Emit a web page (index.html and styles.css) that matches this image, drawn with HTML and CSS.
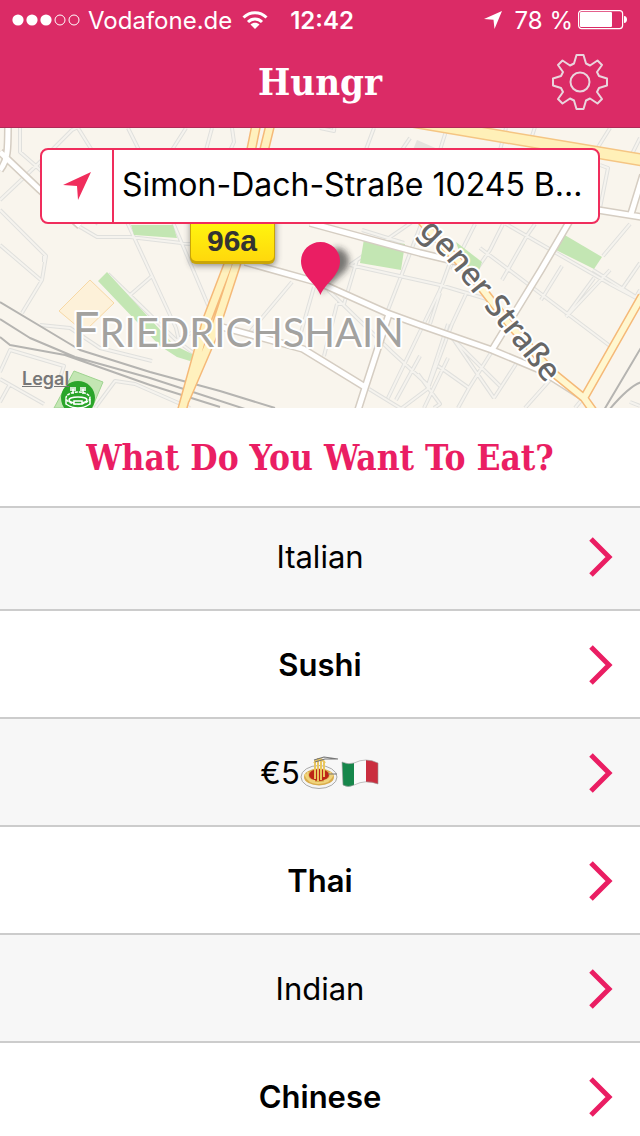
FILE: index.html
```html
<!DOCTYPE html>
<html lang="en">
<head>
    <meta charset="utf-8" />
    <meta name="viewport" content="width=device-width" />
    <title>Hungr</title>
    <link rel="stylesheet" href="styles.css">
</head>
<body>
    <header class="header">
        <div class="status">
            <div class="carrier">
                <svg width="68" height="12" viewBox="0 0 68 12">
                    <g fill="#fff"><circle cx="6" cy="6" r="5.6"/><circle cx="20" cy="6" r="5.6"/><circle cx="34" cy="6" r="5.6"/></g>
                    <g fill="none" stroke="#fff"><circle cx="48" cy="6" r="5"/><circle cx="62" cy="6" r="5"/></g>
                </svg>
                <span>Vodafone.de</span>
                <svg width="26" height="20" viewBox="0 0 26 20">
                    <g fill="none" stroke="#fff" stroke-width="3">
                        <path d="M1.500 7.500C8 1 18 1 24.500 7.500"/>
                        <path d="M6 12C10 8 16 8 20 12"/>
                    </g>
                    <path d="M8.500 14.500C11 12.300 15 12.300 17.500 14.500L13 19Z" fill="#fff"/>
                </svg>
            </div>
            <time class="clock">12:42</time>
            <div class="power">
                <svg class="gps" width="18" height="18" viewBox="0 0 18 18"><path d="M18 0L0 8L9.500 8.800L10.500 18Z" fill="#fff"/></svg>
                <span>78 %</span>
                <svg width="50" height="20" viewBox="0 0 50 20">
                    <rect x=".6" y=".6" width="44" height="18" rx="3" fill="none" stroke="#fff" stroke-width="1.200"/>
                    <rect x="2" y="2" width="32" height="15" rx="1" fill="#fff"/>
                    <path d="M46 6C50 6 50 13 46 13Z" fill="#fff"/>
                </svg>
            </div>
        </div>
        <div class="titlebar">
            <h1>Hungr</h1>
            <button class="settings" type="button" aria-label="Settings">
                <svg width="56" height="56" viewBox="-28 -28 56 56" fill="none" stroke="#ead5dd" stroke-width="2" stroke-linejoin="round">
                    <circle r="9.500"/>
                    <path d="M-3.500-27H3.500L6-18.500L10-16.500L17.500-21.500L22-17L17-10L19-6L27-3.500V3.500L19 6L17 10L22 17L17.500 21.500L10 16.500L6 18.500L3.500 27H-3.500L-6 18.500L-10 16.500L-17.500 21.500L-22 17L-17 10L-19 6L-27 3.500V-3.500L-19-6L-17-10L-22-17L-17.500-21.500L-10-16.500L-6-18.500Z"/>
                </svg>
            </button>
        </div>
    </header>

    <section class="map">
        <!-- viewBox starts at 128, the height of the header -->
        <svg class="tiles" viewBox="0 128 640 280" preserveAspectRatio="xMidYMid slice">
            <defs>
                <linearGradient id="shield" x1="0" y1="0" x2="0" y2="1"><stop offset="0" stop-color="#ffff10"/><stop offset="1" stop-color="#ffd80c"/></linearGradient>
                <filter id="blur" x="-50%" y="-50%" width="200%" height="200%"><feGaussianBlur stdDeviation="3"/></filter>
                <path id="boxhagener" d="M418 232L450 264L485 308L560 401"/>
                <path id="minor" d="M20 128V152L36 166L98 224M0 200L36 166L72 130L92 120M78 128L98 160M128 128L140 152M186 128L172 150M212 128L206 150M232 128L234 142L228 155
                    M75 224L97 237H130L190 244M126 220L152 276M172 220L208 305L218 302M152 276L176 328L180 345M152 276L129 296M108 274L176 340L196 355M176 340L215 322
                    M0 210L46 256L42 280L22 313M0 245L42 281M44 262V256M40 325L70 328L100 348L152 361M0 372L10 350L64 366L60 378M0 379L44 404M10 384L0 402M95 408L115 381L135 384L190 408
                    M292 282L250 332M314 287L296 350M337 304L324 356M328 290L392 352L430 387M357 260L344 304L337 304
                    M350 265L440 285L490 300M404 243L362 230M412 222L350 265M422 222L388 310M452 257L440 290L388 398M374 128L362 160M320 128L334 131L335 120M410 138L395 160M447 128L440 150M506 128L500 150M536 124L530 142M610 128L590 160M640 138L632 154
                    M440 293L430 324M448 324L428 385M418 374L440 404L434 408M452 324L428 388M466 294L452 324M452 338L500 386M454 340L494 398M438 366L469 388L494 348M469 388L458 408M494 398L516 364M430 387L402 408M369 389L400 408M420 356L396 400M424 408L448 358
                    M475 224L452 270M503 224L490 250L468 282M535 224L528 234L502 280M506 224L610 284L640 300M480 248L610 346M562 266L541 300M610 270L566 317M594 278L566 316M593 270L636 297L640 290M600 165L608 168L600 208M630 224L603 256M640 263L622 289M525 408L550 380M575 408L584 397M630 402L640 406"/>
                <path id="street" d="M8 122C8 150 8 160 0 170M0 152L40 190L80 226M310 223L420 253L462 263M245 262L320 283L387 313L420 325L492 350L540 370L584 398M222 327L303 349L365 387M389 314L365 388L358 410M572 217L541 270L492 350M598 210L642 217M643 175L631 214"/>
                <path id="avenue" d="M256 126L228 265L207 320L182 410M270 126L236 265L213 335L185 400"/>
                <path id="road" d="M418 217C445 250 465 265 480 286L510 325L552 372L584 398L594 412M642 296L584 398"/>
                <path id="highway" d="M410 121L642 160"/>
            </defs>
            <rect y="128" width="640" height="280" fill="#f9f5ed"/>
            <path d="M90 280L114 303L84 332L59 311Z" fill="#fdf1d9" stroke="#f7d8a5"/>
            <path d="M417 140L440 150L412 152Z" fill="#e5e3de"/>
            <g fill="none" stroke-linejoin="round">
                <use href="#minor" stroke="#e0e0dd" stroke-width="4"/>
                <use href="#minor" stroke="#f5f3ee" stroke-width="2"/>
            </g>
            <g fill="#c3e6b3">
                <path d="M131 225H173L177 238L134 235Z"/>
                <path d="M107 272L98 281L160 346L177 357L190 361L196 356L174 345Z"/>
                <path d="M364 239L405 244L401 270L360 263Z"/>
                <path d="M563 234L602 257L594 269L556 250Z"/>
                <path d="M456 242L482 262L478 273L464 266Z"/>
                <path d="M74 371L103 382L92 408H54Z" stroke="#9fd490"/>
            </g>
            <g fill="none" stroke-linejoin="round">
                <path d="M0 302L40 326L80 350L150 372L220 391L275 408M0 319L30 338L75 357L150 378L245 409M0 337L10 345L65 355L150 385L220 407M642 346L604 410M642 382Q630 385 609 410" stroke="#b5b4b1" stroke-width="2"/>
                <use href="#street" stroke="#d5cdc2" stroke-width="8"/>
                <use href="#street" stroke="#fff" stroke-width="5"/>
                <use href="#highway" stroke="#f5c583" stroke-width="13"/>
                <use href="#highway" stroke="#fff0b8" stroke-width="10"/>
                <use href="#avenue" stroke="#f5b978" stroke-width="10"/>
                <use href="#avenue" stroke="#fff1bd" stroke-width="7"/>
                <use href="#road" stroke="#f5b978" stroke-width="9"/>
                <use href="#road" stroke="#fff7cf" stroke-width="6"/>
            </g>
            <text class="district" x="238" y="347"><tspan class="initial">F</tspan>RIEDRICHSHAIN</text>
            <text class="streetname"><textPath href="#boxhagener">gener Straße</textPath></text>

            <!-- stadium -->
            <circle cx="78" cy="398" r="17" fill="#2aa52a"/>
            <g fill="none" stroke="#fff" stroke-width="1.500">
                <ellipse cx="78" cy="398" rx="12" ry="6" stroke-dasharray="3 1"/>
                <ellipse cx="78" cy="400" rx="9" ry="3"/>
                <path d="M66 399V404Q78 412 90 404V399M73 394V389M83 394V389M70 388H76M80 388H86M70 390H76M80 390H86"/>
                <rect x="74" y="401" width="8" height="3" fill="#2aa52a"/>
            </g>

            <rect x="190" y="212" width="86" height="54" rx="6" fill="#333" opacity=".5" filter="url(#blur)"/>
            <rect x="190" y="210" width="85" height="54" rx="6" fill="#c9a508"/>
            <rect x="191" y="210" width="83" height="51" rx="5" fill="url(#shield)"/>
            <text class="roadno" x="232" y="251">96a</text>

            <path d="M320 294L346 270C354 258 344 246 334 248Z" fill="#222" opacity=".6" filter="url(#blur)"/>
            <path d="M320.500 295C316 283 301 276 301 261A19.500 19 0 0 1 340 261C340 276 325 283 320.500 295Z" fill="#ea1e63"/>
        </svg>
        <form class="search">
            <button class="locate" type="button" aria-label="Use my location">
                <svg width="28" height="28" viewBox="0 0 28 28"><path d="M28 0L0 13L14 14L15 28Z" fill="#f02d5c"/></svg>
            </button>
            <input type="text" aria-label="Address" value="Simon-Dach-Straße 10245 B..." />
        </form>
        <a class="legal" href="#legal">Legal</a>
    </section>

    <main>
        <h2>What Do You Want To Eat?</h2>
        <ul class="cuisines">
            <li><a href="#italian">Italian<svg class="arrow" viewBox="0 0 24 40"><path d="M2 2L20 20L2 38"/></svg></a></li>
            <li><a href="#sushi">Sushi<svg class="arrow" viewBox="0 0 24 40"><path d="M2 2L20 20L2 38"/></svg></a></li>
            <li>
                <a href="#pasta">€5<svg class="emoji" width="40" height="36" viewBox="0 0 40 36" role="img" aria-label="Spaghetti">
                        <ellipse cx="19" cy="22" rx="18" ry="11.500" fill="#f4f4f4" stroke="#aaa"/>
                        <ellipse cx="19" cy="22" rx="15" ry="8.500" fill="#d9ac4c"/>
                        <ellipse cx="19" cy="20" rx="10" ry="6" fill="#bd2616"/>
                        <path d="M5 19Q9 29 19 28Q30 28 33 19M8 17Q5 25 15 26M30 17Q33 24 24 26" fill="none" stroke="#f0d37b" stroke-width="2"/>
                        <path d="M15 5V24M18 3V26M21 4V25M24 6V22M14 8Q20 0 25 8" fill="none" stroke="#e9c65e" stroke-width="2"/>
                        <path d="M14 5L24 2L38 4M15 7L25 4L38 4M28 19H37" fill="none" stroke="#777" stroke-width="1.200"/>
                    </svg><svg class="emoji" width="40" height="36" viewBox="0 0 40 36" role="img" aria-label="Italy">
                        <path d="M2 7Q8 10 14 8V30Q8 33 3 30Z" fill="#16874b"/>
                        <path d="M14 8Q20 5 26 5V27Q20 27 14 30Z" fill="#fafafa"/>
                        <path d="M26 5Q32 5 38 8V29Q32 27 26 27Z" fill="#ca2e3f"/>
                        <path d="M2 7Q8 10 14 8Q26 2 38 8V29Q26 24 14 30Q8 33 3 30Z" fill="none" stroke="#999" stroke-width=".6"/>
                    </svg><svg class="arrow" viewBox="0 0 24 40"><path d="M2 2L20 20L2 38"/></svg></a>
            </li>
            <li><a href="#thai">Thai<svg class="arrow" viewBox="0 0 24 40"><path d="M2 2L20 20L2 38"/></svg></a></li>
            <li><a href="#indian">Indian<svg class="arrow" viewBox="0 0 24 40"><path d="M2 2L20 20L2 38"/></svg></a></li>
            <li><a href="#chinese">Chinese<svg class="arrow" viewBox="0 0 24 40"><path d="M2 2L20 20L2 38"/></svg></a></li>
        </ul>
    </main>
</body>
</html>
```
FILE: styles.css
```css
*{box-sizing:border-box;}
html{overflow-x:hidden;scrollbar-width:none;}
body{margin:0;background:#fff;color:#000;font-family:Inter,"Liberation Sans",sans-serif;font-size:31px;}
h1,h2{margin:0;font-family:"DejaVu Serif Condensed","DejaVu Serif",serif;font-weight:bold;}
button{padding:0;border:0;background:none;cursor:pointer;}
svg{display:block;}

/* header */
.header{background:#db2b66;color:#fff;border-bottom:1px solid #b02a58;}
.status{display:grid;grid-template-columns:1fr auto 1fr;align-items:center;height:40px;padding:0 12px;font-size:24px;}
.carrier{display:flex;align-items:center;gap:10px;}
.carrier span{margin-left:-2px;}
.clock{padding-left:4px;font-weight:600;}
.power{display:flex;align-items:center;justify-content:flex-end;gap:5px;}
.gps{margin-right:8px;}
.titlebar{display:grid;grid-template-columns:1fr auto 1fr;align-items:center;height:87px;padding:0 32px 4px;}
.titlebar h1{grid-column:2;font-size:38px;line-height:48px;}
.settings{justify-self:end;}

/* map */
.map{position:relative;height:280px;padding:20px 40px;overflow:hidden;}
.tiles{position:absolute;top:0;left:0;width:100%;height:100%;}
.district{font:40px Lato,sans-serif;text-anchor:middle;}
.district .initial{font-size:48px;}
.streetname{font:32px "Noto Sans",sans-serif;}
.district,.streetname{fill:#a3a29f;stroke:#fff;stroke-width:4px;stroke-linejoin:round;paint-order:stroke;}
.streetname{font-weight:500;fill:#666;}
.roadno{font:bold 30px "Liberation Sans",sans-serif;fill:#333;text-anchor:middle;}
.search{position:relative;display:flex;height:76px;background:#fff;border:2px solid #f02d5c;border-radius:8px;}
.locate{display:grid;place-items:center;flex:0 0 72px;border-right:2px solid #f02d5c;}
.search input{flex:1;min-width:0;padding:0 0 4px 8px;border:0;outline:0;background:none;font:inherit;font-size:32px;color:inherit;text-overflow:ellipsis;}
.legal{position:absolute;left:22px;bottom:17px;font-size:18px;line-height:24px;font-weight:600;color:#777;}

/* list */
h2{padding:26px 0 24px;border-bottom:2px solid #ccc;font-size:35px;line-height:48px;text-align:center;color:#ea1e63;}
.cuisines{margin:0;padding:0;list-style:none;}
.cuisines li{border-bottom:2px solid #ccc;}
.cuisines li:nth-child(odd){background:#f7f7f7;}
.cuisines li:nth-child(even){font-weight:600;}
.cuisines a{position:relative;display:flex;justify-content:center;align-items:center;padding:34px 28px 32px;line-height:40px;color:inherit;text-decoration:none;}
.cuisines li:first-child a{padding-top:29px;}
.arrow{position:absolute;right:27px;width:24px;height:40px;fill:none;stroke:#ea1e63;stroke-width:5;}
```
